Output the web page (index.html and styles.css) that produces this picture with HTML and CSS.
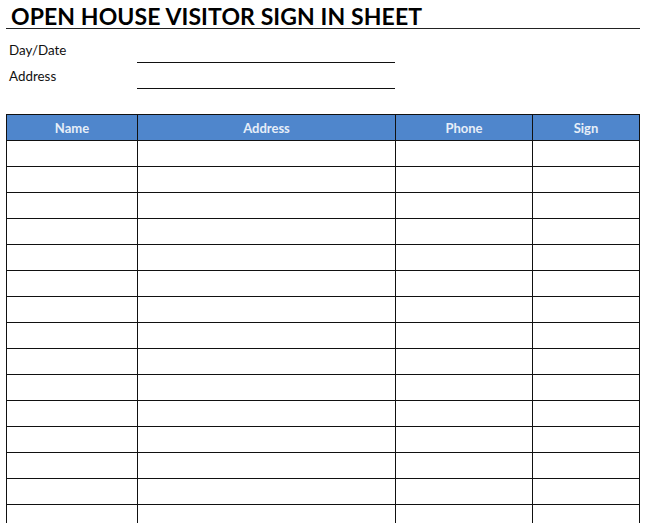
FILE: index.html
```html
<!DOCTYPE html>
<html>
<head>
<meta charset="utf-8">
<link rel="stylesheet" href="styles.css">
</head>
<body>
<div class="page">
  <h1 class="title">OPEN HOUSE VISITOR SIGN IN SHEET</h1>
  <div class="info">
    <div class="label">Day/Date</div><div class="line"></div>
    <div class="label">Address</div><div class="line"></div>
  </div>
  <table class="sheet">
    <colgroup>
      <col class="c-name"><col class="c-addr"><col class="c-phone"><col class="c-sign">
    </colgroup>
    <thead>
      <tr><th>Name</th><th>Address</th><th>Phone</th><th>Sign</th></tr>
    </thead>
    <tbody>
      <tr><td></td><td></td><td></td><td></td></tr>
      <tr><td></td><td></td><td></td><td></td></tr>
      <tr><td></td><td></td><td></td><td></td></tr>
      <tr><td></td><td></td><td></td><td></td></tr>
      <tr><td></td><td></td><td></td><td></td></tr>
      <tr><td></td><td></td><td></td><td></td></tr>
      <tr><td></td><td></td><td></td><td></td></tr>
      <tr><td></td><td></td><td></td><td></td></tr>
      <tr><td></td><td></td><td></td><td></td></tr>
      <tr><td></td><td></td><td></td><td></td></tr>
      <tr><td></td><td></td><td></td><td></td></tr>
      <tr><td></td><td></td><td></td><td></td></tr>
      <tr><td></td><td></td><td></td><td></td></tr>
      <tr><td></td><td></td><td></td><td></td></tr>
      <tr><td></td><td></td><td></td><td></td></tr>
      <tr><td></td><td></td><td></td><td></td></tr>
    </tbody>
  </table>
</div>
</body>
</html>
```
FILE: styles.css
```css
html, body {
  margin: 0;
  padding: 0;
  background: #ffffff;
  overflow: hidden;
}
.page {
  width: 646px;
  height: 523px;
  overflow: hidden;
  font-family: Lato, "Open Sans", "Liberation Sans", sans-serif;
  color: #111;
}
.title {
  margin: 0 6px 0 6px;
  height: 28px;
  box-sizing: content-box;
  border-bottom: 1px solid #222;
  padding: 0 0 0 5px;
  font-size: 23px;
  font-weight: 700;
  line-height: 33px;
  letter-spacing: 0.1px;
  color: #000;
  white-space: nowrap;
}
.info {
  display: grid;
  grid-template-columns: 128px 258px;
  grid-auto-rows: 26px;
  margin: 8px 0 0 9px;
}
.label {
  font-size: 13.4px;
  line-height: 26px;
}
.line {
  border-bottom: 1px solid #111;
  box-sizing: border-box;
}
.sheet {
  margin: 25px 0 0 6px;
  border-collapse: collapse;
  table-layout: fixed;
  width: 633px;
}
.c-name { width: 131px; }
.c-addr { width: 258px; }
.c-phone { width: 137px; }
.c-sign { width: 107px; }
.sheet th, .sheet td {
  border: 1px solid #111;
  padding: 0;
  box-sizing: border-box;
}
.sheet th {
  background: #4f86cc;
  color: #e6eef8;
  font-size: 13px;
  font-weight: 700;
  height: 26px;
  text-align: center;
}
.sheet td {
  height: 26px;
}
```
